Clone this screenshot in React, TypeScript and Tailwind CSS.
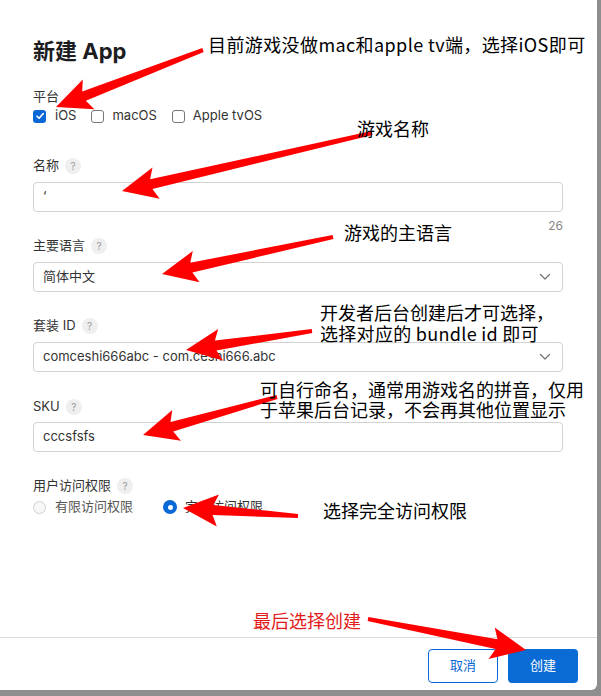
import React from 'react';

const ui = { fontFamily: '"Inter", "Noto Sans CJK SC", sans-serif' };
const cjk = { fontFamily: '"Noto Sans CJK SC", "Inter", sans-serif' };

type Arrow = { t: [number, number]; h: [number, number]; w0?: number; w1?: number; hl?: number; hw?: number };

const arrows: Arrow[] = [
  { t: [203, 50], h: [56, 107] },
  { t: [372, 133], h: [122, 191] },
  { t: [333, 237], h: [162, 274] },
  { t: [312, 331], h: [186, 350] },
  { t: [277, 397], h: [143, 435] },
  { t: [298, 516], h: [183, 508] },
  { t: [368, 619], h: [526, 650] },
];

// tapered shaft + barbed head, tail -> tip
function arrowPoints({ t, h, w0 = 4, w1 = 10, hl = 30, hw = 32 }: Arrow) {
  const dx = h[0] - t[0];
  const dy = h[1] - t[1];
  const len = Math.hypot(dx, dy);
  const ux = dx / len;
  const uy = dy / len;
  const nx = -uy;
  const ny = ux;
  const bx = h[0] - ux * hl;
  const by = h[1] - uy * hl;
  const cx = bx - ux * 5;
  const cy = by - uy * 5;
  const pts = [
    [t[0] + (nx * w0) / 2, t[1] + (ny * w0) / 2],
    [bx + (nx * w1) / 2, by + (ny * w1) / 2],
    [cx + (nx * hw) / 2, cy + (ny * hw) / 2],
    [h[0], h[1]],
    [cx - (nx * hw) / 2, cy - (ny * hw) / 2],
    [bx - (nx * w1) / 2, by - (ny * w1) / 2],
    [t[0] - (nx * w0) / 2, t[1] - (ny * w0) / 2],
  ];
  return pts.map(p => p.map(v => v.toFixed(1)).join(',')).join(' ');
}

const Help = () => (
  <span className="ml-[6px] inline-flex h-[16px] w-[16px] items-center justify-center rounded-full bg-[#efefef] text-[10px] text-[#9a9a9a]">
    ?
  </span>
);

const Label = ({ children, className = '' }: { children: React.ReactNode; className?: string }) => (
  <div className={`flex h-[18px] items-center text-[13px] text-[#333] ${className}`}>
    <span>{children}</span>
    <Help />
  </div>
);

const Chevron = () => (
  <svg width="12" height="8" viewBox="0 0 12 8" className="mr-[11px]">
    <path d="M1.5 1.5 L6 6 L10.5 1.5" fill="none" stroke="#777" strokeWidth="1.3" strokeLinecap="round" strokeLinejoin="round" />
  </svg>
);

const Field = ({ children, select = false, className = '' }: { children: React.ReactNode; select?: boolean; className?: string }) => (
  <div className={`flex h-[30px] w-[530px] items-center justify-between rounded-[4px] border border-[#d2d2d2] bg-white pl-[9px] text-[13px] text-[#333] ${className}`}>
    <span>{children}</span>
    {select && <Chevron />}
  </div>
);

const Check = ({ on, className = '' }: { on?: boolean; className?: string }) =>
  on ? (
    <span className={`flex h-[13px] w-[13px] flex-none items-center justify-center rounded-[3px] bg-[#0a67d6] ${className}`}>
      <svg width="10" height="10" viewBox="0 0 10 10">
        <path d="M2 5.2 L4.1 7.3 L8.2 2.6" fill="none" stroke="#fff" strokeWidth="1.6" strokeLinecap="round" strokeLinejoin="round" />
      </svg>
    </span>
  ) : (
    <span className={`block h-[13px] w-[13px] flex-none rounded-[3px] border border-[#777] bg-white ${className}`} />
  );

const Note = ({ className, children, red }: { className: string; children: React.ReactNode; red?: boolean }) => (
  <div
    className={`pointer-events-none absolute whitespace-nowrap text-[18px] ${red ? 'text-[#e21b1b]' : 'text-black'} ${className}`}
    style={cjk}
  >
    {children}
  </div>
);

export default function App() {
  return (
    <div className="relative flex h-[696px] w-[601px] items-start bg-[#8e8e8e]" style={ui}>
      <div className="flex h-[690px] w-[597px] flex-col rounded-br-[6px] bg-white">
        <div className="flex flex-col pl-[33px] pt-[37px]">
          <h1 className="text-[22px] font-bold leading-[28px] text-[#1d1d1f]">新建 App</h1>

          <div className="mt-[23px] flex h-[18px] items-center text-[13px] text-[#333]">平台</div>
          <div className="mt-[1px] flex h-[18px] items-center text-[13px] text-[#333]">
            <Check on />
            <span className="ml-[9px]">iOS</span>
            <Check className="ml-[15px]" />
            <span className="ml-[8px]">macOS</span>
            <Check className="ml-[15px]" />
            <span className="ml-[8px]">Apple tvOS</span>
          </div>

          <Label className="mt-[32px]">名称</Label>
          <Field className="mt-[7px]">‘</Field>
          <div className="mt-[7px] w-[530px] text-right text-[12px] leading-[14px] text-[#888]">26</div>

          <Label className="mt-[4px]">主要语言</Label>
          <Field select className="mt-[7px]">简体中文</Field>

          <Label className="mt-[25px]">套装 ID</Label>
          <Field select className="mt-[7px]">comceshi666abc - com.ceshi666.abc</Field>

          <Label className="mt-[26px]">SKU</Label>
          <Field className="mt-[6px]">cccsfsfs</Field>

          <Label className="mt-[25px]">用户访问权限</Label>
          <div className="mt-[3px] flex h-[18px] items-center text-[13px]">
            <span className="block h-[13px] w-[13px] flex-none rounded-full border border-[#d0d0d0] bg-[#f7f7f7]" />
            <span className="ml-[9px] text-[#555]">有限访问权限</span>
            <span className="ml-[30px] flex h-[14px] w-[14px] flex-none items-center justify-center rounded-full bg-[#0a67d6]">
              <span className="block h-[5px] w-[5px] rounded-full bg-white" />
            </span>
            <span className="ml-[8px] text-[#333]">完全访问权限</span>
          </div>
        </div>

        <div className="flex-1" />

        <div className="flex justify-end gap-[10px] border-t border-[#dcdcdc] pb-[7px] pr-[19px] pt-[11px]">
          <button className="h-[34px] w-[70px] rounded-[4px] border border-[#0a67d6] bg-white text-[13px] text-[#0a67d6]">取消</button>
          <button className="h-[34px] w-[70px] rounded-[4px] bg-[#0a6bd4] text-[13px] text-white">创建</button>
        </div>
      </div>

      {/* annotations over the form */}
      <svg className="pointer-events-none absolute left-0 top-0" width="601" height="696">
        {arrows.map((a, i) => (
          <polygon key={i} points={arrowPoints(a)} fill="#ff0000" />
        ))}
      </svg>
      <Note className="left-[208px] top-[33px] leading-[22px] tracking-[0.4px]">目前游戏没做mac和apple tv端，选择iOS即可</Note>
      <Note className="left-[357px] top-[117px] leading-[22px]">游戏名称</Note>
      <Note className="left-[344px] top-[221px] leading-[22px]">游戏的主语言</Note>
      <Note className="left-[320px] top-[302px] leading-[20px]">开发者后台创建后才可选择，</Note>
      <Note className="left-[320px] top-[323px] leading-[20px] tracking-[0.3px]">选择对应的 bundle id 即可</Note>
      <Note className="left-[260px] top-[380px] leading-[19px]">可自行命名，通常用游戏名的拼音，仅用</Note>
      <Note className="left-[260px] top-[400px] leading-[19px]">于苹果后台记录，不会再其他位置显示</Note>
      <Note className="left-[323px] top-[499px] leading-[22px]">选择完全访问权限</Note>
      <Note red className="left-[253px] top-[609px] leading-[22px]">最后选择创建</Note>
    </div>
  );
}
